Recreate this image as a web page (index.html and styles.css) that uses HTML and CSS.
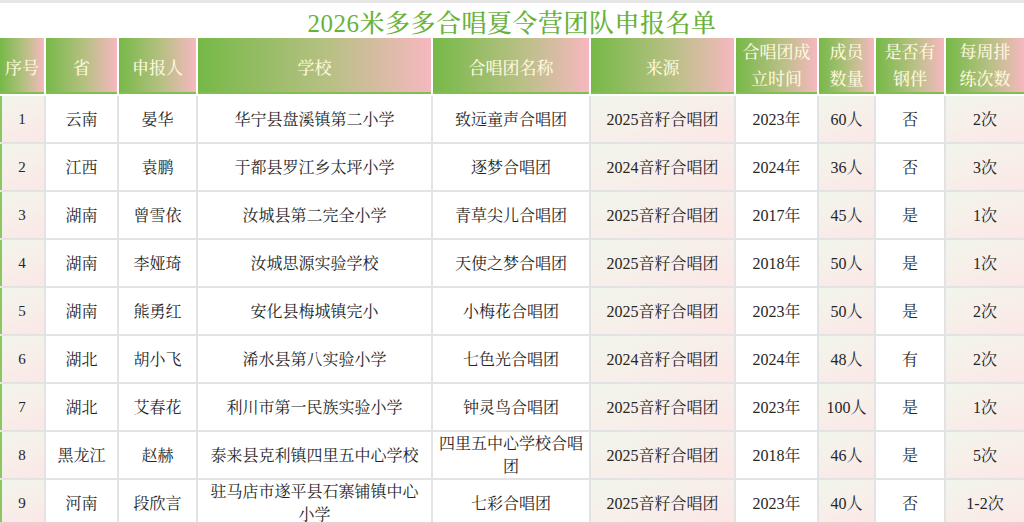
FILE: index.html
```html
<!DOCTYPE html>
<html lang="zh">
<head>
<meta charset="utf-8">
<title>2026米多多合唱夏令营团队申报名单</title>
<link rel="stylesheet" href="styles.css">
</head>
<body>
<div class="sheet">
  <div class="title">2026米多多合唱夏令营团队申报名单</div>
  <div class="row head">
    <div class="h">序号</div>
    <div class="h">省</div>
    <div class="h">申报人</div>
    <div class="h">学校</div>
    <div class="h">合唱团名称</div>
    <div class="h">来源</div>
    <div class="h two">合唱团成<br>立时间</div>
    <div class="h two">成员<br>数量</div>
    <div class="h two">是否有<br>钢伴</div>
    <div class="h two">每周排<br>练次数</div>
  </div>

  <div class="row body">
    <div class="c s first">1</div><div class="c">云南</div><div class="c">晏华</div><div class="c">华宁县盘溪镇第二小学</div><div class="c">致远童声合唱团</div><div class="c s">2025音籽合唱团</div><div class="c">2023年</div><div class="c s">60人</div><div class="c">否</div><div class="c s">2次</div>
  </div>
  <div class="row body">
    <div class="c s first">2</div><div class="c">江西</div><div class="c">袁鹏</div><div class="c">于都县罗江乡太坪小学</div><div class="c">逐梦合唱团</div><div class="c s">2024音籽合唱团</div><div class="c">2024年</div><div class="c s">36人</div><div class="c">否</div><div class="c s">3次</div>
  </div>
  <div class="row body">
    <div class="c s first">3</div><div class="c">湖南</div><div class="c">曾雪依</div><div class="c">汝城县第二完全小学</div><div class="c">青草尖儿合唱团</div><div class="c s">2025音籽合唱团</div><div class="c">2017年</div><div class="c s">45人</div><div class="c">是</div><div class="c s">1次</div>
  </div>
  <div class="row body">
    <div class="c s first">4</div><div class="c">湖南</div><div class="c">李娅琦</div><div class="c">汝城思源实验学校</div><div class="c">天使之梦合唱团</div><div class="c s">2025音籽合唱团</div><div class="c">2018年</div><div class="c s">50人</div><div class="c">是</div><div class="c s">1次</div>
  </div>
  <div class="row body">
    <div class="c s first">5</div><div class="c">湖南</div><div class="c">熊勇红</div><div class="c">安化县梅城镇完小</div><div class="c">小梅花合唱团</div><div class="c s">2025音籽合唱团</div><div class="c">2023年</div><div class="c s">50人</div><div class="c">是</div><div class="c s">2次</div>
  </div>
  <div class="row body">
    <div class="c s first">6</div><div class="c">湖北</div><div class="c">胡小飞</div><div class="c">浠水县第八实验小学</div><div class="c">七色光合唱团</div><div class="c s">2024音籽合唱团</div><div class="c">2024年</div><div class="c s">48人</div><div class="c">有</div><div class="c s">2次</div>
  </div>
  <div class="row body">
    <div class="c s first">7</div><div class="c">湖北</div><div class="c">艾春花</div><div class="c">利川市第一民族实验小学</div><div class="c">钟灵鸟合唱团</div><div class="c s">2025音籽合唱团</div><div class="c">2023年</div><div class="c s">100人</div><div class="c">是</div><div class="c s">1次</div>
  </div>
  <div class="row body">
    <div class="c s first">8</div><div class="c">黑龙江</div><div class="c">赵赫</div><div class="c">泰来县克利镇四里五中心学校</div><div class="c">四里五中心学校合唱<br>团</div><div class="c s">2025音籽合唱团</div><div class="c">2018年</div><div class="c s">46人</div><div class="c">是</div><div class="c s">5次</div>
  </div>
  <div class="row body">
    <div class="c s first">9</div><div class="c">河南</div><div class="c">段欣言</div><div class="c">驻马店市遂平县石寨铺镇中心<br>小学</div><div class="c">七彩合唱团</div><div class="c s">2025音籽合唱团</div><div class="c">2023年</div><div class="c s">40人</div><div class="c">否</div><div class="c s">1-2次</div>
  </div>
</div>
</body>
</html>
```

FILE: styles.css
```css
html, body {
  margin: 0;
  padding: 0;
  background: #ffffff;
}

body {
  width: 1024px;
  height: 525px;
  overflow: hidden;
  font-family: "Liberation Serif", "Noto Serif CJK SC", "Noto Sans CJK SC", serif;
}

.sheet {
  box-sizing: border-box;
  width: 1024px;
  height: 525px;
  overflow: hidden;
  border-bottom: 3px solid #f6c9cf;
}

.title {
  box-sizing: border-box;
  height: 38px;
  border-top: 3px solid #e6e6e6;
  display: flex;
  align-items: center;
  justify-content: center;
  color: #68b23c;
  font-size: 25px;
  font-weight: 500;
  letter-spacing: 0.5px;
  padding-top: 1px;
}

.row {
  display: grid;
  grid-template-columns: 44px 71px 77px 233px 156px 143px 81px 55px 68px 78px;
  column-gap: 2px;
}

.head {
  background: #ffffff;
  padding-bottom: 2px;
}

.h {
  height: 56px;
  display: flex;
  align-items: center;
  justify-content: center;
  text-align: center;
  background: linear-gradient(to right, #76b947 0%, #b6c083 55%, #f6b8c0 100%);
  color: #fdf8dc;
  font-size: 17px;
  font-weight: 500;
  box-shadow: inset 0 -2px 0 #7fbf55;
}

.h.two {
  line-height: 27px;
}

.body {
  background: #e3e3e3;
  padding-bottom: 2px;
}

.c {
  height: 46px;
  display: flex;
  align-items: center;
  justify-content: center;
  text-align: center;
  background: #ffffff;
  color: #262626;
  font-size: 16px;
  line-height: 23px;
  white-space: nowrap;
}

.c.s {
  background: linear-gradient(160deg, #f1f5eb 0%, #f7efe9 50%, #fce6e6 100%);
}

.c.first {
  box-shadow: inset 2px 0 0 #8cc663;
  font-size: 15px;
}
```
